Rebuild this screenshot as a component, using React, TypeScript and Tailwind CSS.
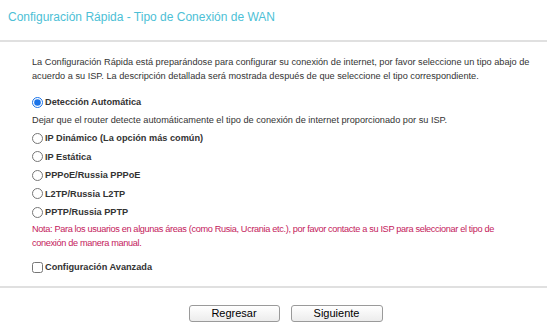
import React, { useState } from 'react';

const options = [
  'IP Dinámico (La opción más común)',
  'IP Estática',
  'PPPoE/Russia PPPoE',
  'L2TP/Russia L2TP',
  'PPTP/Russia PPTP',
];

export default function App() {
  const [selected, setSelected] = useState('auto');
  const [advanced, setAdvanced] = useState(false);

  return (
    <div className="w-[547px] h-[326px] bg-white text-[#333] text-[9.2px] leading-[14px] font-['Liberation_Sans',Arial,sans-serif] overflow-hidden">
      {/* Title */}
      <div className="h-[40px] px-[8px] pt-[8px]">
        <h1 className="text-[12px] leading-[18px] text-[#4dbfd6]">Configuración Rápida - Tipo de Conexión de WAN</h1>
      </div>
      <div className="h-[2px] bg-[#e0e0e0]" />

      {/* Body */}
      <div className="pl-[32px] pr-[14px] pt-[13px] h-[244px]">
        <p>
          La Configuración Rápida está preparándose para configurar su conexión de internet, por favor seleccione un tipo abajo de acuerdo a su ISP. La descripción detallada será mostrada después de que seleccione el tipo correspondiente.
        </p>

        <label className="flex items-center gap-[2px] mt-[12px] h-[14px] font-bold">
          <input
            type="radio"
            name="wan"
            className="m-0 w-[11px] h-[11px] accent-[#1a73e8]"
            checked={selected === 'auto'}
            onChange={() => setSelected('auto')}
          />
          Detección Automática
        </label>
        <p className="mt-[4px]">
          Dejar que el router detecte automáticamente el tipo de conexión de internet proporcionado por su ISP.
        </p>

        <div className="flex flex-col gap-[4.5px] mt-[4px]">
          {options.map((o) => (
            <label key={o} className="flex items-center gap-[2px] h-[14px] font-bold">
              <input
                type="radio"
                name="wan"
                className="m-0 w-[11px] h-[11px] accent-[#1a73e8]"
                checked={selected === o}
                onChange={() => setSelected(o)}
              />
              {o}
            </label>
          ))}
        </div>

        <p className="mt-[3px] text-[#c41a5c] tracking-[-0.35px] whitespace-nowrap">
          Nota: Para los usuarios en algunas áreas (como Rusia, Ucrania etc.), por favor contacte a su ISP para seleccionar el tipo de
          <br />
          conexión de manera manual.
        </p>

        <label className="flex items-center gap-[2px] mt-[10px] h-[14px] font-bold">
          <input
            type="checkbox"
            className="m-0 w-[11px] h-[11px]"
            checked={advanced}
            onChange={(e) => setAdvanced(e.target.checked)}
          />
          Configuración Avanzada
        </label>
      </div>
      <div className="h-[2px] bg-[#e0e0e0]" />

      {/* Buttons */}
      <div className="flex justify-center gap-[11px] pt-[17px] pl-[24px]">
        <button className="w-[91px] h-[17px] rounded-[3px] border border-[#9a9a9a] bg-gradient-to-b from-white to-[#ececec] text-[11px] leading-[15px] text-black">
          Regresar
        </button>
        <button className="w-[92px] h-[17px] rounded-[3px] border border-[#9a9a9a] bg-gradient-to-b from-white to-[#ececec] text-[11px] leading-[15px] text-black">
          Siguiente
        </button>
      </div>
    </div>
  );
}
